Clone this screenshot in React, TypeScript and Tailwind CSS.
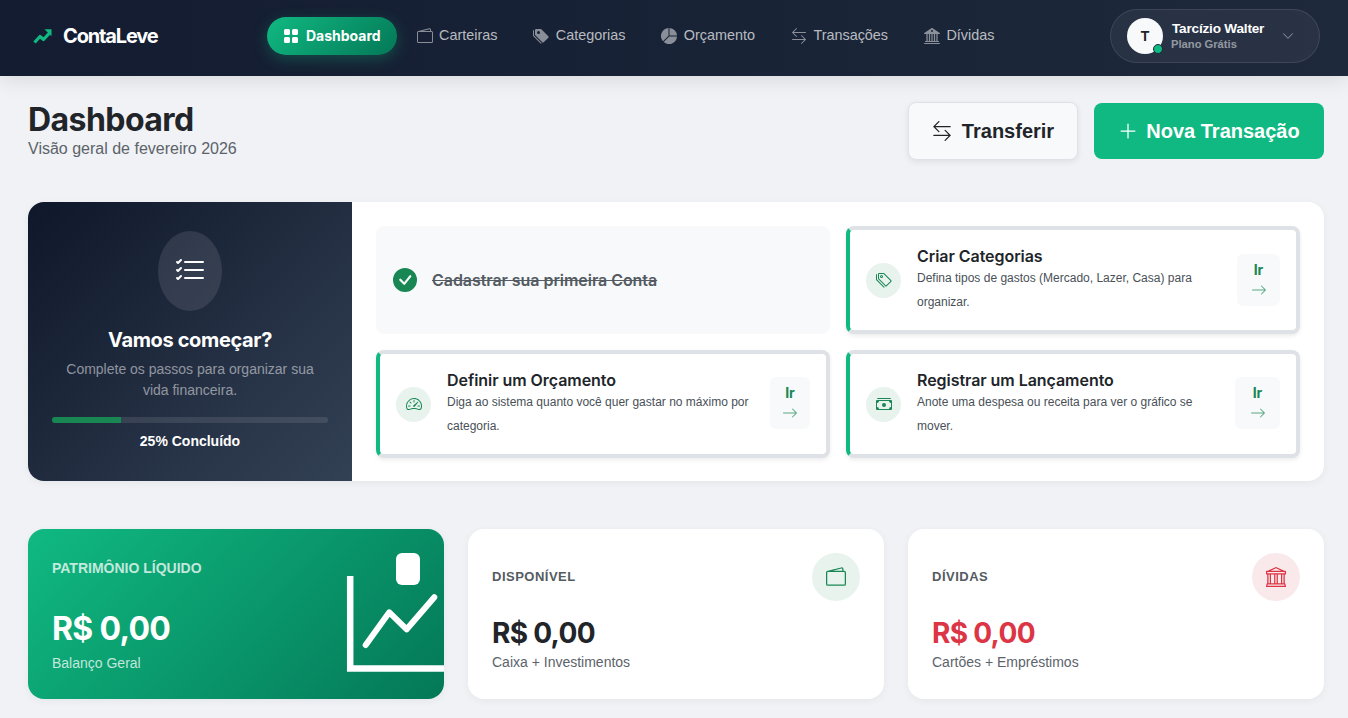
import React from 'react';
import {
  BsArrowLeftRight,
  BsArrowRight,
  BsBank,
  BsBank2,
  BsCashStack,
  BsCheckCircleFill,
  BsChevronDown,
  BsGridFill,
  BsListCheck,
  BsPieChartFill,
  BsPlusLg,
  BsSpeedometer2,
  BsTags,
  BsTagsFill,
  BsWallet2,
} from 'react-icons/bs';

const navItems = [
  { label: 'Carteiras', icon: BsWallet2 },
  { label: 'Categorias', icon: BsTagsFill },
  { label: 'Orçamento', icon: BsPieChartFill },
  { label: 'Transações', icon: BsArrowLeftRight },
  { label: 'Dívidas', icon: BsBank2 },
];

const Header: React.FC = () => (
  <header className="relative z-10 flex h-[76px] items-center bg-[linear-gradient(90deg,#131c31,#1e293b)] pb-1 pl-8 pr-7 shadow-[0_4px_20px_rgba(0,0,0,0.1)]">
    <div className="flex w-[235px] items-center">
      <svg className="h-5 w-5 text-[#10b981]" viewBox="0 0 20 20" fill="none" stroke="currentColor">
        <path d="M2.5 16.5 8 10.5l3.5 3L18 6.5" strokeWidth="3.2" strokeLinejoin="round" />
        <path d="M12.5 3.2h7v7z" fill="currentColor" stroke="none" />
      </svg>
      <span className="ml-[11px] font-['Inter',sans-serif] text-xl font-bold tracking-[-1.15px] text-white">ContaLeve</span>
    </div>
    <nav className="flex items-center gap-1">
      <a className="flex h-[38px] items-center gap-[7px] rounded-full bg-[linear-gradient(135deg,#10b981,#047857)] px-4 font-['Inter',sans-serif] text-sm font-bold text-white shadow-[0_4px_15px_rgba(16,185,129,0.3)]">
        <BsGridFill className="h-4 w-4" />
        Dashboard
      </a>
      {navItems.map((item) => (
        <a key={item.label} className="flex h-[38px] items-center gap-[6.4px] px-4 text-[14.4px] text-[#ffffffb3]">
          <item.icon className="h-4 w-4 opacity-70" />
          {item.label}
        </a>
      ))}
    </nav>
    <div className="ml-auto flex h-[54px] w-[210px] items-center rounded-full border border-white/10 bg-white/5 pl-4">
      <div className="relative flex h-9 w-9 items-center justify-center rounded-full bg-[#f8f9fa] text-sm font-bold text-[#212529]">
        T
        <span className="absolute bottom-0 right-0 h-[10px] w-[10px] rounded-full border border-[#1e293b] bg-[#10b981]" />
      </div>
      <div className="ml-[9px] flex flex-col">
        <span className="text-[13.6px] font-bold leading-[16px] tracking-[-0.2px] text-white">Tarcízio Walter</span>
        <span className="-ml-px text-[11.2px] font-bold leading-[14px] text-[#ffffff80]">Plano Grátis</span>
      </div>
      <BsChevronDown className="ml-[18px] h-3 w-3 text-[#ffffff80]" />
    </div>
  </header>
);

const PageTitle: React.FC = () => (
  <div className="flex items-center justify-between">
    <div>
      <h1 className="font-['Inter',sans-serif] text-[32px] font-bold leading-[36px] tracking-[-0.55px] text-[#212529]">Dashboard</h1>
      <p className="text-base leading-[22px] text-[#5c636a]">Visão geral de fevereiro 2026</p>
    </div>
    <div className="flex items-center gap-4">
      <button className="flex h-[58px] w-[170px] items-center justify-center gap-[10px] rounded-lg border border-[#dee2e6] bg-[#f8f9fa] text-xl font-bold text-[#212529] shadow-[0_2px_6px_rgba(0,0,0,0.08)]">
        <BsArrowLeftRight className="h-5 w-5" />
        Transferir
      </button>
      <button className="flex h-14 w-[230px] items-center justify-center gap-2 rounded-lg bg-[#10b981] text-xl font-bold text-white">
        <BsPlusLg className="h-5 w-5" />
        Nova Transação
      </button>
    </div>
  </div>
);

const StepCard: React.FC<{
  icon: React.ElementType;
  title: string;
  text: string;
  goClass: string;
}> = ({ icon: Icon, title, text, goClass }) => (
  <div className="flex h-[108px] items-center rounded-lg border-4 border-[#dee2e6] border-l-[#10b981] bg-white p-4 shadow-[0_2px_4px_rgba(0,0,0,0.08)]">
    <div className="flex h-[35px] w-[35px] shrink-0 items-center justify-center rounded-full bg-[#e8f3ee] text-[#198754]">
      <Icon className="h-4 w-4" />
    </div>
    <div className="ml-4 min-w-0 flex-1 pr-5">
      <h3 className="font-['Inter',sans-serif] text-base font-semibold leading-[20px] tracking-[-0.05px] text-[#212529]">{title}</h3>
      <p className="text-xs leading-[24px] text-[#495057]">{text}</p>
    </div>
    <a className={`flex h-[52px] shrink-0 flex-col items-center justify-center rounded-md bg-[#f8f9fa] pb-[3px] ${goClass}`}>
      <span className="font-['Inter',sans-serif] text-sm font-bold leading-[20px] text-[#198754]">Ir</span>
      <BsArrowRight className="mt-0.5 h-4 w-4 text-[#198754] opacity-70" />
    </a>
  </div>
);

const Onboarding: React.FC = () => (
  <section className="flex h-[279px] overflow-hidden rounded-2xl bg-white shadow-[0_2px_8px_rgba(0,0,0,0.05)]">
    <div className="flex w-[324px] shrink-0 flex-col items-center justify-center bg-[linear-gradient(135deg,#0f172a,#334155)] px-6 text-center">
      <div className="flex h-20 w-16 items-center justify-center rounded-[50%] bg-white/10">
        <BsListCheck className="h-8 w-8 text-white" />
      </div>
      <h2 className="mt-[17px] font-['Inter',sans-serif] text-xl font-bold leading-[24px] tracking-[-0.35px] text-white">Vamos começar?</h2>
      <p className="mt-[7px] text-sm leading-[21px] text-[#ffffff80]">Complete os passos para organizar sua vida financeira.</p>
      <div className="mt-4 h-1.5 w-full overflow-hidden rounded-full bg-white/10">
        <div className="h-full w-1/4 bg-[#198754]" />
      </div>
      <p className="mt-2 pb-px text-sm font-bold leading-[20px] text-white">25% Concluído</p>
    </div>
    <div className="grid flex-1 grid-cols-2 content-start gap-4 p-6">
      <div className="flex h-[108px] items-center rounded-lg bg-[#f8f9fa] px-[17px]">
        <BsCheckCircleFill className="h-6 w-6 text-[#198754]" />
        <span className="ml-[15px] font-['Inter',sans-serif] text-base font-semibold tracking-[-0.05px] text-[#545b62] line-through">Cadastrar sua primeira Conta</span>
      </div>
      <StepCard icon={BsTags} title="Criar Categorias" text="Defina tipos de gastos (Mercado, Lazer, Casa) para organizar." goClass="w-[43px]" />
      <StepCard icon={BsSpeedometer2} title="Definir um Orçamento" text="Diga ao sistema quanto você quer gastar no máximo por categoria." goClass="-mt-0.5 w-10" />
      <StepCard icon={BsCashStack} title="Registrar um Lançamento" text="Anote uma despesa ou receita para ver o gráfico se mover." goClass="-mt-0.5 w-[45px]" />
    </div>
  </section>
);

const StatCard: React.FC<{
  label: string;
  sub: string;
  icon: React.ElementType;
  danger?: boolean;
}> = ({ label, sub, icon: Icon, danger }) => (
  <div className="h-[170px] rounded-2xl bg-white p-6 shadow-[0_2px_8px_rgba(0,0,0,0.05)]">
    <div className="flex items-center justify-between">
      <span className="text-[13px] font-bold tracking-[0.5px] text-[#545b62]">{label}</span>
      <div className={danger ? 'flex h-12 w-12 items-center justify-center rounded-full bg-[#f9e9eb] text-[#dc3545]' : 'flex h-12 w-12 items-center justify-center rounded-full bg-[#e8f3ee] text-[#198754]'}>
        <Icon className="h-5 w-5" />
      </div>
    </div>
    <p className={danger ? "mt-[15px] font-['Inter',sans-serif] text-[28px] font-bold leading-[34px] tracking-[-0.7px] text-[#dc3545]" : "mt-[15px] font-['Inter',sans-serif] text-[28px] font-bold leading-[34px] tracking-[-0.7px] text-[#212529]"}>R$ 0,00</p>
    <p className="mt-0.5 text-sm leading-[20px] text-[#5c636a]">{sub}</p>
  </div>
);

const NetWorthCard: React.FC = () => (
  <div className="relative h-[170px] overflow-hidden rounded-2xl bg-[linear-gradient(135deg,#10b981,#047857)] p-6 shadow-[0_2px_8px_rgba(0,0,0,0.05)]">
    <span className="block pt-[5px] text-sm font-bold leading-[20px] text-white/75">PATRIMÔNIO LÍQUIDO</span>
    <p className="mt-[31px] font-['Inter',sans-serif] text-[32px] font-bold leading-[40px] tracking-[-0.7px] text-white">R$ 0,00</p>
    <p className="mt-1 text-sm leading-[20px] text-white/75">Balanço Geral</p>
    {/* icon escaping its badge, drawn over the card */}
    <svg className="absolute left-0 top-0 h-[170px] w-[416px]" viewBox="0 0 416 170" fill="none">
      <rect x="368" y="24" width="24" height="32" rx="6" fill="#fff" />
      <path d="M322.2 47v92.5H416" stroke="#fff" strokeWidth="6.5" />
      <path d="M337.7 116 361.3 83.3 378.7 100.3 406.3 68.3" stroke="#fff" strokeWidth="6" strokeLinecap="round" strokeLinejoin="round" />
    </svg>
  </div>
);

export default function App() {
  return (
    <div className="h-[718px] overflow-hidden bg-[#f0f2f5] font-['Liberation_Sans',Arial,sans-serif]">
      <Header />
      <main className="pl-7 pr-6 pt-[26px]">
        <PageTitle />
        <div className="mt-[42px]">
          <Onboarding />
        </div>
        <div className="mt-12 grid grid-cols-3 gap-6">
          <NetWorthCard />
          <StatCard label="DISPONÍVEL" sub="Caixa + Investimentos" icon={BsWallet2} />
          <StatCard label="DÍVIDAS" sub="Cartões + Empréstimos" icon={BsBank} danger />
        </div>
      </main>
    </div>
  );
}
